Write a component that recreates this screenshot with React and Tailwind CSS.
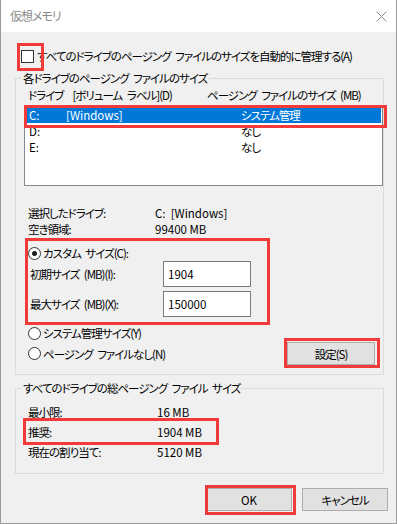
import React from "react";

const font = {
  fontFamily: '"Noto Sans CJK JP", "Noto Sans", sans-serif',
};

function Radio({ checked }) {
  return (
    <span className="w-[13px] h-[13px] rounded-full border border-[#333333] bg-white flex items-center justify-center shrink-0">
      {checked && <span className="w-[5px] h-[5px] rounded-full bg-[#1a1a1a]" />}
    </span>
  );
}

function Group({ label, className, children }) {
  return (
    <div className={"relative border border-[#dcdcdc] " + className}>
      <span className="absolute left-[6px] -top-[9px] bg-[#f0f0f0] px-[1px] leading-[16px] whitespace-nowrap">{label}</span>
      {children}
    </div>
  );
}

export default function App() {
  return (
    <div
      className="relative w-[397px] h-[524px] overflow-hidden bg-[#f0f0f0] border-x border-b border-[#9b9b9b] text-[11.5px] leading-[16px] text-black tracking-[-1px] [word-spacing:3px] whitespace-nowrap [font-feature-settings:'palt']"
      style={font}
    >
      {/* title bar */}
      <div className="h-[32px] bg-white flex items-center justify-between pl-[9px] pr-[9px]">
        <span className="text-[#8a8a8a] text-[12px]">仮想メモリ</span>
        <svg width="11" height="11" viewBox="0 0 11 11" className="mt-[1px]">
          <path d="M0.5 0.5 L10.5 10.5 M10.5 0.5 L0.5 10.5" stroke="#8a8a8a" strokeWidth="1" fill="none" />
        </svg>
      </div>

      <div className="pl-[14px] flex flex-col">
        {/* auto-manage checkbox */}
        <div className="mt-[16px] h-[16px] flex items-center pl-[6px]">
          <span className="w-[13px] h-[13px] border border-[#333333] bg-white shrink-0" />
          <span className="ml-[3px]">すべてのドライブのページング ファイルのサイズを自動的に管理する(A)</span>
        </div>

        {/* group 1 */}
        <Group label="各ドライブのページング ファイルのサイズ" className="mt-[14px] w-[369px] h-[297px]">
          <div className="pt-[8px] pl-[12px] flex h-[24px]">
            <span className="w-[179px]">ドライブ&nbsp;&nbsp;[ボリューム ラベル](D)</span>
            <span>ページング ファイルのサイズ (MB)</span>
          </div>
          <div className="mt-[2px] ml-[8px] w-[359px] h-[81px] border border-[#828790] bg-white pt-[1px] px-[1px]">
            <div className="h-[16px] flex items-center bg-[#0078d7] text-white pl-[3px]">
              <span className="w-[37px] tracking-normal">C:</span>
              <span className="w-[175px] tracking-normal">[Windows]</span>
              <span>システム管理</span>
            </div>
            <div className="h-[16px] flex items-center pl-[3px]">
              <span className="w-[212px] tracking-normal">D:</span>
              <span>なし</span>
            </div>
            <div className="h-[16px] flex items-center pl-[3px]">
              <span className="w-[212px] tracking-normal">E:</span>
              <span>なし</span>
            </div>
          </div>

          <div className="mt-[19px] pl-[12px] flex">
            <span className="w-[127px]">選択したドライブ:</span>
            <span className="tracking-normal [word-spacing:0px]">C:&nbsp;&nbsp;[Windows]</span>
          </div>
          <div className="pl-[12px] flex">
            <span className="w-[127px]">空き領域:</span>
            <span className="tracking-normal [word-spacing:0px]">99400 MB</span>
          </div>

          <div className="mt-[8px] pl-[12px] flex items-center h-[16px]">
            <Radio checked />
            <span className="ml-[2px]">カスタム サイズ(C):</span>
          </div>
          <div className="pl-[14px] flex items-center h-[26px]">
            <span className="w-[133px]">初期サイズ (MB)(I):</span>
            <div className="w-[88px] h-[26px] border border-[#7a7a7a] bg-white flex items-center pl-[4px] tracking-normal">1904</div>
          </div>
          <div className="mt-[4px] pl-[14px] flex items-center h-[26px]">
            <span className="w-[133px]">最大サイズ (MB)(X):</span>
            <div className="w-[88px] h-[26px] border border-[#7a7a7a] bg-white flex items-center pl-[4px] tracking-normal">150000</div>
          </div>

          <div className="mt-[8px] pl-[12px] flex items-center h-[16px]">
            <Radio />
            <span className="ml-[2px]">システム管理サイズ(Y)</span>
          </div>
          <div className="mt-[1px] pl-[12px] pr-[8px] flex items-center justify-between h-[23px]">
            <div className="flex items-center">
              <Radio />
              <span className="ml-[2px]">ページング ファイルなし(N)</span>
            </div>
            <div className="w-[88px] h-[23px] border border-[#adadad] bg-[#e1e1e1] flex items-center justify-center">設定(S)</div>
          </div>
        </Group>

        {/* group 2 */}
        <Group label="すべてのドライブの総ページング ファイル サイズ" className="mt-[13px] w-[369px] h-[86px]">
          <div className="pt-[15px] pl-[12px] flex">
            <span className="w-[129px]">最小限:</span>
            <span className="tracking-normal [word-spacing:0px]">16 MB</span>
          </div>
          <div className="mt-[4px] pl-[12px] flex">
            <span className="w-[129px]">推奨:</span>
            <span className="tracking-normal [word-spacing:0px]">1904 MB</span>
          </div>
          <div className="mt-[4px] pl-[12px] flex">
            <span className="w-[129px]">現在の割り当て:</span>
            <span className="tracking-normal [word-spacing:0px]">5120 MB</span>
          </div>
        </Group>

        {/* buttons */}
        <div className="mt-[14px] pr-[8px] flex justify-end gap-[10px]">
          <div className="w-[86px] h-[23px] border border-[#adadad] bg-[#e1e1e1] flex items-center justify-center tracking-normal">OK</div>
          <div className="w-[86px] h-[23px] border border-[#adadad] bg-[#e1e1e1] flex items-center justify-center">キャンセル</div>
        </div>
      </div>

      {/* red annotation boxes */}
      <div className="absolute left-[16px] top-[43px] w-[27px] h-[28px] border-[3px] border-[#f23a3a]" />
      <div className="absolute left-[23px] top-[105px] w-[363px] h-[23px] border-[3px] border-[#f23a3a]" />
      <div className="absolute left-[24px] top-[238px] w-[245px] h-[87px] border-[3px] border-[#f23a3a]" />
      <div className="absolute left-[283px] top-[338px] w-[96px] h-[30px] border-[3px] border-[#f23a3a]" />
      <div className="absolute left-[22px] top-[418px] w-[196px] h-[27px] border-[3px] border-[#f23a3a]" />
      <div className="absolute left-[204px] top-[485px] w-[91px] h-[30px] border-[3px] border-[#f23a3a]" />
    </div>
  );
}
